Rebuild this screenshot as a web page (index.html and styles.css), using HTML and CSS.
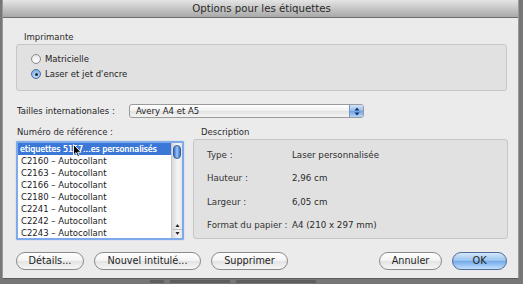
FILE: index.html
```html
<!DOCTYPE html>
<html lang="fr">
<head>
<meta charset="utf-8">
<link rel="stylesheet" href="styles.css">
</head>
<body>
<div class="window">
  <div class="titlebar">Options pour les étiquettes</div>
  <div class="content">
    <div class="grouplabel printer-label">Imprimante</div>
    <div class="groupbox printer-box">
      <div class="radio-row"><span class="radio"></span><span>Matricielle</span></div>
      <div class="radio-row"><span class="radio on"></span><span>Laser et jet d'encre</span></div>
    </div>
    <div class="size-row">
      <span class="size-label">Tailles internationales :</span>
      <div class="select"><span class="select-text">Avery A4 et A5</span><span class="select-arrows"><svg width="6" height="9" viewBox="0 0 6 9"><path d="M3 0.5 L5.5 3.5 H0.5 Z M3 8.5 L5.5 5.5 H0.5 Z" fill="#1c2f5a"/></svg></span></div>
    </div>
    <div class="columns">
      <div class="col-left">
        <div class="grouplabel">Numéro de référence :</div>
        <div class="listbox">
          <div class="list-rows">
            <div class="row sel">etiquettes 5157...es personnalisés</div>
            <div class="row">C2160 – Autocollant</div>
            <div class="row">C2163 – Autocollant</div>
            <div class="row">C2166 – Autocollant</div>
            <div class="row">C2180 – Autocollant</div>
            <div class="row">C2241 – Autocollant</div>
            <div class="row">C2242 – Autocollant</div>
            <div class="row">C2243 – Autocollant</div>
          </div>
          <div class="scrollbar">
            <div class="thumb"></div>
            <div class="arrows">
              <svg width="9" height="18" viewBox="0 0 9 18"><path d="M4.5 4 L6.5 7 H2.5 Z" fill="#222"/><path d="M4.5 15 L6.5 12 H2.5 Z" fill="#222"/><line x1="0" y1="9.5" x2="9" y2="9.5" stroke="#bbb"/></svg>
            </div>
          </div>
          <svg class="cursor" width="9" height="14" viewBox="0 0 9 14"><path d="M0.5 0.5 V11 L3 8.6 L4.8 12.8 L6.4 12.1 L4.7 8.2 H8 Z" fill="#000" stroke="#fff" stroke-width="0.9"/></svg>
        </div>
      </div>
      <div class="col-right">
        <div class="grouplabel desc-label">Description</div>
        <div class="groupbox desc-box">
          <div class="desc-row"><span class="key">Type :</span><span>Laser personnalisée</span></div>
          <div class="desc-row"><span class="key">Hauteur :</span><span>2,96 cm</span></div>
          <div class="desc-row"><span class="key">Largeur :</span><span>6,05 cm</span></div>
          <div class="desc-row"><span class="key">Format du papier :</span><span>A4 (210 x 297 mm)</span></div>
        </div>
      </div>
    </div>
    <div class="buttons">
      <div class="btn w-details">Détails...</div>
      <div class="btn w-nouvel">Nouvel intitulé...</div>
      <div class="btn w-supp">Supprimer</div>
      <div class="spacer"></div>
      <div class="btn w-annuler">Annuler</div>
      <div class="btn ok w-ok">OK</div>
    </div>
  </div>
</div>
<div class="below"><span class="blur b1"></span><span class="blur b2"></span><span class="blur b3"></span></div>
</body>
</html>
```
FILE: styles.css
```css
html, body {
  margin: 0;
  padding: 0;
}
body {
  width: 523px;
  height: 284px;
  overflow: hidden;
  background: #777;
  font-family: "DejaVu Sans", "Liberation Sans", sans-serif;
  font-size: 8.5px;
  color: #222;
}
.window {
  margin-left: 2px;
  width: 517px;
  height: 279px;
  background: #ebebeb;
  border-left: 1px solid #9a9a9a;
  border-right: 1px solid #9a9a9a;
  box-sizing: border-box;
  border-bottom: 1px solid #5c5c5c;
}
.titlebar {
  height: 18px;
  line-height: 18px;
  text-align: center;
  font-size: 10.2px;
  color: #2a2a2a;
  background: linear-gradient(#e4e4e4, #c6c6c6 50%, #a9a9a9);
  border-bottom: 1px solid #6e6e6e;
  box-sizing: border-box;
  padding-left: 2px;
}
.content {
  padding: 0 10px 0 13px;
}
.grouplabel {
  height: 11px;
  line-height: 11px;
  color: #2c2c2c;
}
.printer-label {
  margin-top: 14px;
  padding-left: 8px;
}
.groupbox {
  background: #e1e1e1;
  border: 1px solid #c6c6c6;
  border-radius: 3px;
  box-sizing: border-box;
}
.printer-box {
  margin-top: 1px;
  width: 491px;
  height: 47px;
  padding: 8px 0 0 14px;
}
.radio-row {
  display: flex;
  align-items: center;
  gap: 4px;
  height: 12px;
  margin-bottom: 3px;
}
.radio {
  width: 10px;
  height: 10px;
  border-radius: 50%;
  border: 1px solid #8b8b8b;
  background: radial-gradient(circle at 50% 70%, #ffffff, #e0e0e0);
  box-sizing: border-box;
  position: relative;
}
.radio.on {
  border-color: #4b6e9e;
  background: radial-gradient(circle at 50% 70%, #c9e2fb, #6fa2dc);
}
.radio.on::after {
  content: "";
  position: absolute;
  left: 2.5px;
  top: 2.5px;
  width: 3px;
  height: 3px;
  border-radius: 50%;
  background: #1a2a44;
}
.size-row {
  margin-top: 13px;
  display: flex;
  align-items: center;
  height: 14px;
}
.size-label {
  width: 112px;
  padding-left: 1px;
}
.select {
  width: 235px;
  height: 14px;
  border: 1px solid #9a9a9a;
  border-radius: 3px;
  box-sizing: border-box;
  background: linear-gradient(#ffffff, #f0f0f0 50%, #e2e2e2 51%, #f4f4f4);
  display: flex;
  align-items: center;
  justify-content: space-between;
  overflow: hidden;
}
.select-text {
  padding-left: 6px;
}
.select-arrows {
  width: 13px;
  height: 100%;
  display: flex;
  align-items: center;
  justify-content: center;
  background: linear-gradient(#d4e6fb, #8db9ec 50%, #6aa3e6 51%, #b4d6fa);
  border-left: 1px solid #7d95b6;
}
.columns {
  margin-top: 9px;
  display: flex;
  gap: 9px;
}
.col-left {
  width: 168px;
}
.col-left .grouplabel {
  padding-left: 1px;
}
.listbox {
  margin-top: 3px;
  width: 168px;
  height: 99px;
  border: 2px solid #7eaaeb;
  border-radius: 2px;
  box-sizing: border-box;
  background: #fff;
  display: flex;
  position: relative;
  box-shadow: 0 0 1px #5c8fdc;
}
.list-rows {
  flex: 1;
  min-width: 0;
  overflow: hidden;
}
.row {
  height: 12px;
  line-height: 12px;
  padding-left: 3px;
  white-space: nowrap;
  color: #1a1a1a;
}
.row.sel {
  background: #3a77d6;
  color: #fff;
  font-family: "DejaVu Sans Condensed", "DejaVu Sans", sans-serif;
  font-size: 8.6px;
  letter-spacing: 0.1px;
  text-shadow: 0.3px 0 0 #fff;
  padding-left: 2px;
}
.scrollbar {
  width: 10px;
  flex: none;
  background: linear-gradient(90deg, #d8d8d8, #f6f6f6 60%, #e6e6e6);
  border-left: 1px solid #c8c8c8;
  display: flex;
  flex-direction: column;
  justify-content: space-between;
  align-items: center;
}
.thumb {
  margin-top: 2px;
  width: 8px;
  height: 14px;
  border-radius: 4px;
  background: linear-gradient(90deg, #3a6fc4, #9cc6f5 50%, #3d73c8);
  border: 1px solid #2e5ba4;
  box-sizing: border-box;
}
.arrows {
  height: 18px;
  display: flex;
}
.cursor {
  position: absolute;
  left: 55px;
  top: 1px;
}
.col-right {
  width: 317px;
}
.desc-label {
  padding-left: 8px;
}
.desc-box {
  margin-top: 1px;
  height: 100px;
  padding: 10px 0 0 13px;
}
.desc-row {
  display: flex;
  height: 11px;
  line-height: 11px;
  margin-bottom: 12.3px;
  color: #2a2a2a;
  font-size: 8.7px;
}
.desc-row .key {
  width: 85px;
  color: #333;
}
.buttons {
  margin-top: 12px;
  display: flex;
  gap: 10px;
  height: 18px;
  padding-right: 1px;
}
.spacer {
  flex: 1;
}
.btn {
  height: 18px;
  line-height: 16px;
  border: 1px solid #8a8a8a;
  border-radius: 9px;
  box-sizing: border-box;
  text-align: center;
  background: linear-gradient(#ffffff, #f3f3f3 50%, #e3e3e3 51%, #f6f6f6);
  color: #1e1e1e;
  font-size: 9.7px;
}
.btn.ok {
  border-color: #4f6d98;
  background: linear-gradient(#d5e7fb, #95c1ee 50%, #71a9e8 51%, #c3e0fd);
}
.w-details { width: 68px; }
.w-nouvel { width: 107px; }
.w-supp { width: 77px; }
.w-annuler { width: 63px; }
.w-ok { width: 55px; }
.below {
  height: 5px;
  display: flex;
  gap: 6px;
  padding: 1px 0 0 150px;
}
.blur {
  height: 3px;
  background: #5e5e5e;
  filter: blur(0.6px);
}
.b1 { width: 14px; }
.b2 { width: 60px; }
.b3 { width: 80px; }
```
